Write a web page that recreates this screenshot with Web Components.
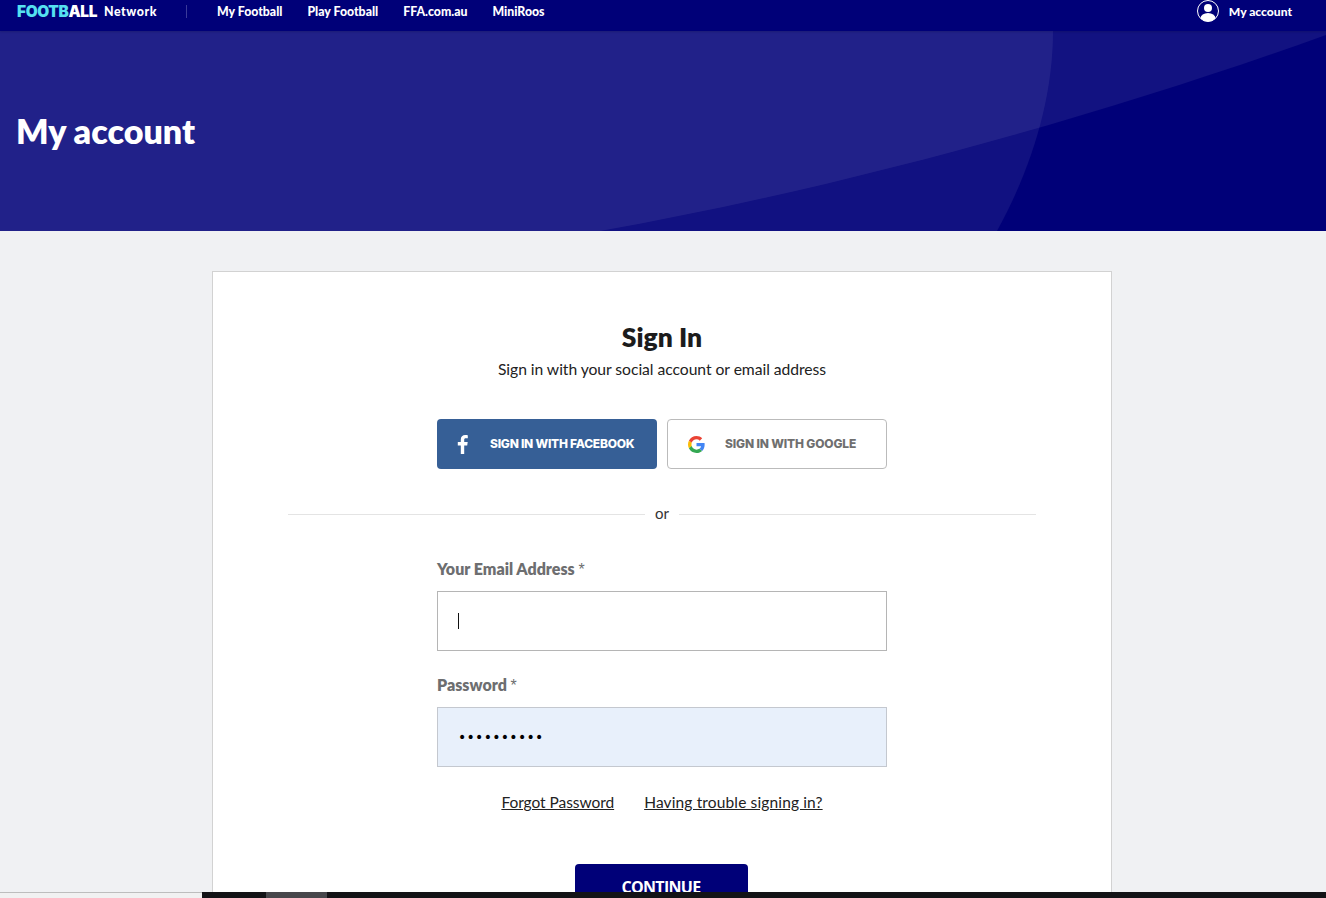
<!DOCTYPE html>
<html lang="en">
<head>
<meta charset="utf-8">
<title>My account</title>
<style>
  html, body { margin: 0; height: 100%; overflow: hidden; }
  body { display: flex; flex-direction: column; height: 898px; background: #f0f1f3; font-family: Lato, "Liberation Sans", sans-serif; }
</style>
</head>
<body>
<ffa-topbar></ffa-topbar>
<ffa-hero>My account</ffa-hero>
<ffa-main>
  <ffa-signin></ffa-signin>
</ffa-main>
<ffa-scrollstrip></ffa-scrollstrip>

<script>
window.customElements.define('ffa-topbar', class extends HTMLElement {
  constructor() {
    super();
    this.shadow = this.attachShadow({ mode: 'open' });
    this.shadow.innerHTML = `
      <style>
        :host { display: flex; flex: none; height: 31px; align-items: flex-start; background: #000078; color: #fff;
          font: 900 12.3px/1 Lato, sans-serif; box-sizing: border-box; padding: 0 34px 0 17px; position: relative; z-index: 1; box-shadow: 0 1px 2px rgba(0,0,0,.15); }
        a { color: inherit; text-decoration: none; white-space: nowrap; }
        .logo { font: 900 15.4px/1 Inter, sans-serif; letter-spacing: -.35px; margin-top: 4px; width: 81px; white-space: nowrap; }
        .logo span { color: #55e0f0; }
        .net { margin: 6px 0 0 6px; font: 900 12.4px/1 Lato, sans-serif; letter-spacing: .55px; width: 53px; }
        .sep { width: 1px; height: 13px; background: #3a3a9a; margin: 5px 30px 0 29px; flex: none; }
        nav { display: flex; gap: 25px; margin-top: 6px; }
        .acct { margin-left: auto; display: flex; align-items: flex-start; gap: 10px; font-size: 12.1px; }
        .acct a { margin-top: 6px; }
        svg { display: block; }
      </style>
      <div class="logo"><span>FOOTB</span>ALL</div>
      <a class="net" href="#">Network</a>
      <div class="sep"></div>
      <nav>
        <a href="#">My Football</a>
        <a href="#">Play Football</a>
        <a href="#">FFA.com.au</a>
        <a href="#">MiniRoos</a>
      </nav>
      <div class="acct">
        <svg width="22" height="22" viewBox="0 0 22 22">
          <defs><clipPath id="c"><circle cx="11" cy="11" r="10.5"/></clipPath></defs>
          <circle cx="11" cy="11" r="10.5" fill="none" stroke="#fff" stroke-width="1"/>
          <circle cx="11" cy="8" r="4" fill="#fff"/>
          <ellipse cx="11" cy="18.5" rx="7.5" ry="5.5" fill="#fff" clip-path="url(#c)"/>
        </svg>
        <a href="#">My account</a>
      </div>
    `;
  }
});

window.customElements.define('ffa-hero', class extends HTMLElement {
  constructor() {
    super();
    this.shadow = this.attachShadow({ mode: 'open' });
    this.shadow.innerHTML = `
      <style>
        :host { display: flex; flex: none; height: 200px; align-items: center; background: #000078; box-sizing: border-box;
          padding: 0 16px 0; position: relative; overflow: hidden; }
        h1 { margin: 0; font: 800 34px/1 Lato, sans-serif; color: #fff; position: relative; }
        svg { position: absolute; left: 0; top: 0; }
      </style>
      <svg width="1326" height="200" viewBox="0 0 1326 200">
        <path d="M0 0H1053C1053 70 1030 140 997 200H0Z" fill="#fff" fill-opacity=".065"/>
        <path d="M0 0H1326V4C1100 85 850 155 600 200H0Z" fill="#fff" fill-opacity=".07"/>
      </svg>
      <h1><slot></slot></h1>
    `;
  }
});

window.customElements.define('ffa-main', class extends HTMLElement {
  constructor() {
    super();
    this.shadow = this.attachShadow({ mode: 'open' });
    this.shadow.innerHTML = `
      <style>
        :host { display: flex; flex: 1 1 0; min-height: 0; overflow: hidden; justify-content: center; padding: 40px 2px 0 0; box-sizing: border-box; }
      </style>
      <slot></slot>
    `;
  }
});

window.customElements.define('ffa-social-button', class extends HTMLElement {
  constructor() {
    super();
    this.shadow = this.attachShadow({ mode: 'open' });
    this.shadow.innerHTML = `
      <style>
        :host { display: flex; align-items: center; width: 220px; height: 50px; box-sizing: border-box; border-radius: 4px;
          font: 800 12px/1 Inter, sans-serif; letter-spacing: -.25px; white-space: nowrap; }
        :host([kind=facebook]) { background: #365f96; color: #fff; padding-left: 19px; }
        :host([kind=google]) { background: #fff; color: #6f6f6f; border: 1px solid #bbb; padding-left: 20px; letter-spacing: -.15px; }
        .icon { width: 17px; flex: none; display: flex; justify-content: center; margin-right: 20px; }
        :host([kind=facebook]) .icon { width: 12px; margin-right: 22px; }
        svg { display: block; }
      </style>
      <span class="icon"><slot name="icon"></slot></span>
      <slot></slot>
    `;
  }
});

window.customElements.define('ffa-field', class extends HTMLElement {
  constructor() {
    super();
    this.shadow = this.attachShadow({ mode: 'open' });
    this.shadow.innerHTML = `
      <style>
        :host { display: block; width: 450px; }
        label { display: block; font: 800 16px/20px Lato, sans-serif; color: #6d6e70; margin-bottom: 11px; }
        label i { font: 400 16px/20px "Liberation Sans", sans-serif; }
        .box { height: 60px; box-sizing: border-box; border: 1px solid #b5b5b5; background: #fff; display: flex; align-items: center; padding-left: 20px; }
        :host([filled]) .box { background: #e8f0fb; border-color: #c4c8cf; }
        .caret { width: 1px; height: 16px; background: #111; }
        .dots { color: #000; font: 400 14px/1 "DejaVu Sans", sans-serif; letter-spacing: .3px; }
      </style>
      <label>${this.getAttribute('label')} <i>*</i></label>
      <div class="box">${this.hasAttribute('filled')
        ? '<span class="dots">••••••••••</span>'
        : '<span class="caret"></span>'}</div>
    `;
  }
});

window.customElements.define('ffa-signin', class extends HTMLElement {
  constructor() {
    super();
    this.shadow = this.attachShadow({ mode: 'open' });
    this.shadow.innerHTML = `
      <style>
        :host { display: flex; flex-direction: column; align-items: center; width: 900px; height: 700px; flex: none; box-sizing: border-box;
          background: #fff; border: 1px solid #d2d2d2; padding-top: 50px; color: #1a1a1a; font-family: Lato, sans-serif; }
        h2 { margin: 0; font: 800 26.5px/30px Lato, sans-serif; color: #1c1c1c; }
        p { margin: 5px 0 0; font: 400 15.7px/24px Lato, sans-serif; color: #222; letter-spacing: -.05px; }
        .social { display: flex; gap: 10px; margin-top: 38px; }
        .or { display: flex; align-items: center; gap: 10px; width: 748px; margin-top: 33px; margin-bottom: 33px; font: 400 15px/24px Lato, sans-serif; color: #333; }
        .or::before, .or::after { content: ""; flex: 1; height: 1px; background: #e4e4e4; }
        .or span { position: relative; top: -1px; }
        .form { display: flex; flex-direction: column; gap: 24px; }
        .links { display: flex; gap: 30px; margin-top: 23px; font: 400 15.5px/24px Lato, sans-serif; letter-spacing: -.05px; }
        .links a { color: #222; text-decoration: underline; }
        .links a + a { letter-spacing: .14px; }
        .cont { margin: 50px 2px 0 0; width: 173px; height: 50px; background: #000078; color: #fff; border-radius: 4px; border: 0; padding: 0 0 5px;
          font: 700 16px/1 "Open Sans", sans-serif; letter-spacing: -.7px; display: flex; align-items: center; justify-content: center; flex: none; box-sizing: border-box; }
        svg { display: block; }
      </style>
      <h2>Sign In</h2>
      <p>Sign in with your social account or email address</p>
      <div class="social">
        <ffa-social-button kind="facebook">
          <svg slot="icon" width="11" height="19" viewBox="0 0 11 19"><path fill="#fff" d="M7.2 19V10.4H10.2L10.7 7H7.2V4.9C7.2 3.9 7.5 3.2 8.9 3.2H10.8V.2C10.4.1 9.4 0 8.2 0 5.6 0 3.8 1.600 3.800 4.500V7H.8V10.400H3.800V19Z"/></svg>
          SIGN IN WITH FACEBOOK
        </ffa-social-button>
        <ffa-social-button kind="google">
          <svg slot="icon" width="17" height="17" viewBox="0 0 48 48">
            <path fill="#EA4335" d="M24 9.500c3.540 0 6.710 1.220 9.210 3.600l6.850-6.850C35.900 2.380 30.470 0 24 0 14.620 0 6.510 5.380 2.560 13.220l7.980 6.190C12.430 13.720 17.740 9.500 24 9.500z"/>
            <path fill="#4285F4" d="M46.980 24.550c0-1.570-.15-3.090-.38-4.550H24v9.020h12.940c-.58 2.960-2.260 5.480-4.780 7.180l7.730 6c4.510-4.180 7.090-10.360 7.090-17.650z"/>
            <path fill="#FBBC05" d="M10.530 28.590c-.48-1.450-.76-2.990-.76-4.590s.27-3.140.76-4.590l-7.980-6.190C.92 16.460 0 20.120 0 24c0 3.880.92 7.540 2.560 10.780l7.970-6.190z"/>
            <path fill="#34A853" d="M24 48c6.480 0 11.930-2.130 15.890-5.810l-7.730-6c-2.150 1.450-4.920 2.300-8.160 2.300-6.260 0-11.570-4.220-13.470-9.910l-7.980 6.190C6.510 42.620 14.620 48 24 48z"/>
          </svg>
          SIGN IN WITH GOOGLE
        </ffa-social-button>
      </div>
      <div class="or"><span>or</span></div>
      <div class="form">
        <ffa-field label="Your Email Address"></ffa-field>
        <ffa-field label="Password" filled></ffa-field>
      </div>
      <div class="links">
        <a href="#">Forgot Password</a>
        <a href="#">Having trouble signing in?</a>
      </div>
      <button class="cont">CONTINUE</button>
    `;
  }
});

window.customElements.define('ffa-scrollstrip', class extends HTMLElement {
  constructor() {
    super();
    this.shadow = this.attachShadow({ mode: 'open' });
    this.shadow.innerHTML = `
      <style>
        :host { display: flex; flex: none; height: 6px; }
        .left { width: 202px; background: #f1f1f1; border-top: 1px solid #bdbdbd; box-sizing: border-box; }
        .track { flex: 1; background: #131316; padding-left: 64px; display: flex; }
        .thumb { width: 61px; background: #47474b; }
      </style>
      <div class="left"></div>
      <div class="track"><div class="thumb"></div></div>
    `;
  }
});
</script>
</body>
</html>
